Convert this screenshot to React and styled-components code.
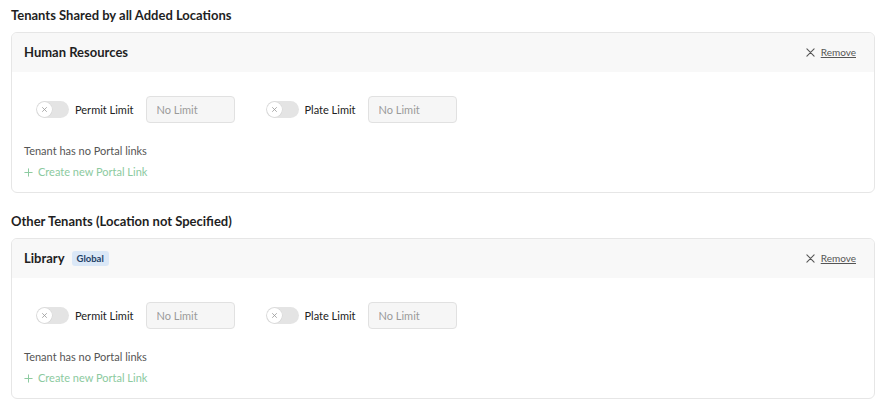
import React from "react";
import styled, { createGlobalStyle } from "styled-components";

const Global = createGlobalStyle`
  html, body { margin: 0; padding: 0; background: #fff; }
  body { font-family: "Lato", "Noto Sans", sans-serif; color: #222; }
  * { box-sizing: border-box; }
`;

const Page = styled.div`
  padding: 8px 16px 12px 11px;
  display: flex;
  flex-direction: column;
`;

const SectionTitle = styled.h2`
  margin: ${(p) => (p.$first ? "0" : "21px")} 0 9px 0;
  font-size: 13px;
  line-height: 15px;
  font-weight: 700;
  color: #1f1f1f;
`;

const Card = styled.div`
  border: 1px solid #e6e6e6;
  border-radius: 6px;
  background: #fff;
  overflow: hidden;
`;

const CardHeader = styled.div`
  height: 39px;
  background: #f8f8f8;
  display: flex;
  align-items: center;
  padding: 0 18px 1px 12px;
`;

const CardTitle = styled.span`
  font-size: 13px;
  font-weight: 700;
  color: #1f1f1f;
`;

const Badge = styled.span`
  margin-left: 7px;
  background: #dbe8f7;
  color: #233f66;
  font-size: 9.5px;
  font-weight: 700;
  border-radius: 3px;
  padding: 2px 5px;
  line-height: 11px;
`;

const RemoveButton = styled.button`
  margin-left: auto;
  border: none;
  background: none;
  padding: 0;
  display: flex;
  align-items: center;
  gap: 6px;
  cursor: pointer;
  font-family: inherit;
  font-size: 10px;
  color: #555;
  span {
    text-decoration: underline;
  }
`;

const CardBody = styled.div`
  padding: 24px 12px 13px 12px;
  display: flex;
  flex-direction: column;
`;

const LimitsRow = styled.div`
  display: flex;
  align-items: center;
  padding-left: 12px;
  gap: 31px;
  margin-bottom: 21px;
`;

const LimitGroup = styled.div`
  display: flex;
  align-items: center;
`;

const Toggle = styled.div`
  width: 33px;
  height: 17px;
  border-radius: 9px;
  background: #e4e4e4;
  position: relative;
  flex-shrink: 0;
`;

const Knob = styled.div`
  position: absolute;
  top: 1px;
  left: 1px;
  width: 15px;
  height: 15px;
  border-radius: 50%;
  background: #fff;
  box-shadow: 0 0 0 0.5px #d4d4d4;
  display: flex;
  align-items: center;
  justify-content: center;
`;

const LimitLabel = styled.span`
  margin: 0 12px 0 6px;
  font-size: 11px;
  color: #222;
`;

const LimitInput = styled.input`
  width: 89px;
  height: 27px;
  border: 1px solid #e1e1e1;
  background: #f6f6f6;
  border-radius: 4px;
  padding: 0 10px;
  font-family: inherit;
  font-size: 11px;
  color: #333;
  outline: none;
  &::placeholder {
    color: #9a9a9a;
  }
`;

const Muted = styled.div`
  font-size: 11px;
  color: #555;
  line-height: 14px;
  margin-bottom: 7px;
`;

const CreateLink = styled.a`
  font-size: 11px;
  color: #8ccaa0;
  line-height: 14px;
  display: flex;
  align-items: center;
  gap: 5px;
  cursor: pointer;
`;

const XIcon = ({ size = 9, color = "#555", w = 1.2 }) => (
  <svg width={size} height={size} viewBox="0 0 10 10">
    <path d="M1 1L9 9M9 1L1 9" stroke={color} strokeWidth={w} strokeLinecap="round" />
  </svg>
);

const PlusIcon = () => (
  <svg width="9" height="9" viewBox="0 0 10 10">
    <path d="M5 0.5V9.5M0.5 5H9.5" stroke="#8ccaa0" strokeWidth="1.1" />
  </svg>
);

const Limit = ({ label }) => (
  <LimitGroup>
    <Toggle>
      <Knob>
        <XIcon size={5} color="#999" w={1.6} />
      </Knob>
    </Toggle>
    <LimitLabel>{label}</LimitLabel>
    <LimitInput placeholder="No Limit" />
  </LimitGroup>
);

const TenantCard = ({ name, badge }) => (
  <Card>
    <CardHeader>
      <CardTitle>{name}</CardTitle>
      {badge && <Badge>{badge}</Badge>}
      <RemoveButton>
        <XIcon />
        <span>Remove</span>
      </RemoveButton>
    </CardHeader>
    <CardBody>
      <LimitsRow>
        <Limit label="Permit Limit" />
        <Limit label="Plate Limit" />
      </LimitsRow>
      <Muted>Tenant has no Portal links</Muted>
      <CreateLink>
        <PlusIcon />
        Create new Portal Link
      </CreateLink>
    </CardBody>
  </Card>
);

export default function App() {
  return (
    <>
      <Global />
      <Page>
        <SectionTitle $first>Tenants Shared by all Added Locations</SectionTitle>
        <TenantCard name="Human Resources" />
        <SectionTitle>Other Tenants (Location not Specified)</SectionTitle>
        <TenantCard name="Library" badge="Global" />
      </Page>
    </>
  );
}
